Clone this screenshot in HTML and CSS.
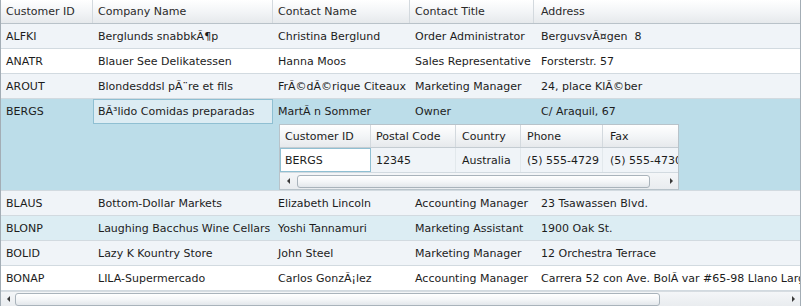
FILE: index.html
```html
<html>
  <head>
    <title>Customers</title>
    <link rel="stylesheet" href="styles.css">
  </head>
  <body>
    <div class="grid">
      <div class="head">
        <div class="cell c-id">Customer ID</div>
        <div class="cell c-company">Company Name</div>
        <div class="cell c-contact">Contact Name</div>
        <div class="cell c-title">Contact Title</div>
        <div class="cell c-address">Address</div>
      </div>

      <div class="row alt">
        <div class="cell c-id">ALFKI</div>
        <div class="cell c-company">Berglunds snabbkÃ¶p</div>
        <div class="cell c-contact">Christina Berglund</div>
        <div class="cell c-title">Order Administrator</div>
        <div class="cell c-address">BerguvsvÃ¤gen&nbsp; 8</div>
      </div>
      <div class="row">
        <div class="cell c-id">ANATR</div>
        <div class="cell c-company">Blauer See Delikatessen</div>
        <div class="cell c-contact">Hanna Moos</div>
        <div class="cell c-title">Sales Representative</div>
        <div class="cell c-address">Forsterstr. 57</div>
      </div>
      <div class="row alt">
        <div class="cell c-id">AROUT</div>
        <div class="cell c-company">Blondesddsl pÃ¨re et fils</div>
        <div class="cell c-contact">FrÃ©dÃ©rique Citeaux</div>
        <div class="cell c-title">Marketing Manager</div>
        <div class="cell c-address">24, place KlÃ©ber</div>
      </div>

      <div class="row selected">
        <div class="line">
          <div class="cell c-id">BERGS</div>
          <div class="cell c-company current">BÃ³lido Comidas preparadas</div>
          <div class="cell c-contact">MartÃ n Sommer</div>
          <div class="cell c-title">Owner</div>
          <div class="cell c-address">C/ Araquil, 67</div>
        </div>
        <div class="details">
          <div class="subgrid">
            <div class="sub-head">
              <div class="cell s-id">Customer ID</div>
              <div class="cell s-postal">Postal Code</div>
              <div class="cell s-country">Country</div>
              <div class="cell s-phone">Phone</div>
              <div class="cell s-fax">Fax</div>
            </div>
            <div class="sub-row">
              <div class="cell s-id current">BERGS</div>
              <div class="cell s-postal">12345</div>
              <div class="cell s-country">Australia</div>
              <div class="cell s-phone">(5) 555-4729</div>
              <div class="cell s-fax">(5) 555-4730</div>
            </div>
            <div class="scrollbar small">
              <span class="arrow left"></span>
              <span class="thumb"></span>
              <span class="arrow right"></span>
            </div>
          </div>
        </div>
      </div>

      <div class="row alt">
        <div class="cell c-id">BLAUS</div>
        <div class="cell c-company">Bottom-Dollar Markets</div>
        <div class="cell c-contact">Elizabeth Lincoln</div>
        <div class="cell c-title">Accounting Manager</div>
        <div class="cell c-address">23 Tsawassen Blvd.</div>
      </div>
      <div class="row hover">
        <div class="cell c-id">BLONP</div>
        <div class="cell c-company">Laughing Bacchus Wine Cellars</div>
        <div class="cell c-contact">Yoshi Tannamuri</div>
        <div class="cell c-title">Marketing Assistant</div>
        <div class="cell c-address">1900 Oak St.</div>
      </div>
      <div class="row alt">
        <div class="cell c-id">BOLID</div>
        <div class="cell c-company">Lazy K Kountry Store</div>
        <div class="cell c-contact">John Steel</div>
        <div class="cell c-title">Marketing Manager</div>
        <div class="cell c-address">12 Orchestra Terrace</div>
      </div>
      <div class="row">
        <div class="cell c-id">BONAP</div>
        <div class="cell c-company">LILA-Supermercado</div>
        <div class="cell c-contact">Carlos GonzÃ¡lez</div>
        <div class="cell c-title">Accounting Manager</div>
        <div class="cell c-address">Carrera 52 con Ave. BolÃ var #65-98 Llano Largo</div>
      </div>

      <div class="scrollbar">
        <span class="arrow left"></span>
        <span class="thumb"></span>
        <span class="arrow right"></span>
      </div>
    </div>
  </body>
</html>
```

FILE: styles.css
```css
:root {
  --fonts: "DejaVu Sans", Verdana, sans-serif;
  --text: #1c1c1c;
  --grid-border: #a3adb5;
  --row-line: #d2dae0;
  --alt-background: #f0f4f8;
  --selected-background: #bcdde9;
  --hover-background: #dcedf3;
}

body,
html {
  margin: 0;
  padding: 0;
  background: #ffffff;
  font-family: var(--fonts);
  font-size: 11px;
  color: var(--text);
}

.grid {
  width: 801px;
  height: 306px;
  border-left: 1px solid var(--grid-border);
  border-right: 1px solid var(--grid-border);
  box-sizing: border-box;
  overflow: hidden;
  display: flex;
  flex-direction: column;
}

.cell {
  flex: none;
  box-sizing: border-box;
  padding-left: 5px;
  white-space: nowrap;
  overflow: hidden;
  display: flex;
  align-items: center;
}

.c-id { width: 92px; }
.c-company { width: 180px; }
.c-contact { width: 137px; }
.c-title { width: 124px; }
.c-address { width: 280px; padding-left: 7px; }

.head {
  display: flex;
  height: 24px;
  flex: none;
  background: linear-gradient(#ffffff, #f3f5f7 50%, #e6e9ec);
  border-bottom: 1px solid #b9c2c9;
  box-sizing: border-box;
  color: #2a2a2a;
}

.head .cell {
  border-right: 1px solid #d3d9de;
}

.row {
  display: flex;
  flex: none;
  height: 25px;
  box-sizing: border-box;
  border-bottom: 1px solid var(--row-line);
  background: #ffffff;
}

.row.alt {
  background: var(--alt-background);
}

.row.hover {
  background: var(--hover-background);
}

.row.selected {
  height: 92px;
  flex-direction: column;
  background: var(--selected-background);
}

.line {
  display: flex;
  height: 25px;
}

.cell.current {
  border: 1px solid #8fbfd2;
  background: #dcecf3;
  padding-left: 4px;
}

.details {
  padding-left: 278px;
}

.subgrid {
  width: 400px;
  border: 1px solid #b8c3ca;
  box-sizing: border-box;
  background: #ffffff;
  overflow: hidden;
}

.sub-head,
.sub-row {
  display: flex;
  box-sizing: border-box;
}

.sub-head {
  height: 23px;
  background: linear-gradient(#ffffff, #f3f5f7 50%, #e6e9ec);
  border-bottom: 1px solid #c4ccd2;
}

.sub-head .cell {
  border-right: 1px solid #d3d9de;
}

.sub-row {
  height: 25px;
  background: var(--alt-background);
  border-bottom: 1px solid var(--row-line);
}

.s-id { width: 91px; }
.s-postal { width: 85px; }
.s-country { width: 65px; padding-left: 6px; }
.s-phone { width: 82px; padding-left: 6px; }
.s-fax { width: 82px; padding-left: 7px; }

.sub-row .cell {
  border-right: 1px solid #e2e8ec;
}

.sub-row .cell.current {
  background: #ffffff;
  border: 1px solid #8fbfd2;
}

.scrollbar {
  display: flex;
  align-items: center;
  height: 15px;
  flex: none;
  background: linear-gradient(#f4f6f8, #e9ecef);
  border-top: 1px solid #d6dce1;
  box-sizing: border-box;
}

.scrollbar.small {
  height: 16px;
  border-top: none;
}

.arrow {
  flex: none;
  width: 14px;
  height: 100%;
  display: flex;
  align-items: center;
  justify-content: center;
}

.arrow::before {
  content: "";
  width: 0;
  height: 0;
  border-top: 3px solid transparent;
  border-bottom: 3px solid transparent;
}

.arrow.left::before {
  border-right: 3px solid #3a3a3a;
}

.arrow.right::before {
  border-left: 3px solid #3a3a3a;
}

.arrow.right {
  margin-left: auto;
}

.thumb {
  height: 13px;
  width: 645px;
  box-sizing: border-box;
  border: 1px solid #a9b3bb;
  border-radius: 3px;
  background: linear-gradient(#ffffff, #f4f6f8 50%, #e3e7eb);
}

.scrollbar.small .arrow.left {
  width: 17px;
}

.scrollbar.small .thumb {
  width: 353px;
}
```
